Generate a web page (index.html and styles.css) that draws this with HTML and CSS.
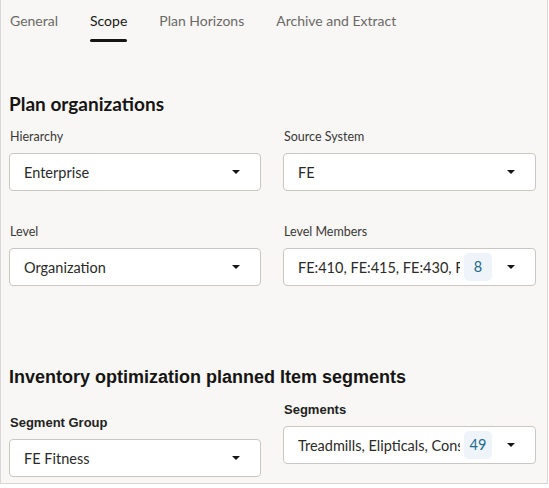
FILE: index.html
```html
<!DOCTYPE html>
<html lang="en">
<head>
    <meta charset="UTF-8">
    <title>Scope</title>
    <link rel="stylesheet" href="styles.css">
</head>
<body>

<div class="panel">
    <nav class="tabs">
        <a class="tab">General</a>
        <a class="tab active">Scope</a>
        <a class="tab">Plan Horizons</a>
        <a class="tab">Archive and Extract</a>
    </nav>

    <section class="orgs">
        <h2>Plan organizations</h2>
        <div class="grid">
            <div class="field">
                <label>Hierarchy</label>
                <div class="select"><span class="value">Enterprise</span><span class="caret"></span></div>
            </div>
            <div class="field">
                <label>Source System</label>
                <div class="select"><span class="value">FE</span><span class="caret"></span></div>
            </div>
            <div class="field">
                <label>Level</label>
                <div class="select"><span class="value">Organization</span><span class="caret"></span></div>
            </div>
            <div class="field">
                <label>Level Members</label>
                <div class="select"><span class="value">FE:410, FE:415, FE:430, FE</span><span class="badge">8</span><span class="caret"></span></div>
            </div>
        </div>
    </section>

    <section class="segments">
        <h2>Inventory optimization planned Item segments</h2>
        <div class="grid">
            <div class="field low">
                <label>Segment Group</label>
                <div class="select"><span class="value">FE Fitness</span><span class="caret"></span></div>
            </div>
            <div class="field">
                <label>Segments</label>
                <div class="select"><span class="value">Treadmills, Elipticals, Cons</span><span class="badge">49</span><span class="caret"></span></div>
            </div>
        </div>
    </section>
</div>

</body>
</html>
```

FILE: styles.css
```css
body {
    margin: 0;
    background-color: #fff;
    font-family: Lato, "Noto Sans", sans-serif;
    color: #161513;
}
.panel {
    width: 546px;
    height: 483px;
    background-color: #f8f7f5;
    border: 1px solid #d9d7d3;
    border-top: none;
}
.tabs {
    display: flex;
    gap: 32px;
    padding-left: 9px;
}
.tab {
    display: flex;
    flex-direction: column;
    padding-top: 11px;
    font-size: 14px;
    line-height: 20px;
    color: #6b6966;
}
.tab::after {
    content: "";
    height: 3px;
    margin-top: 8px;
    border-radius: 2px;
}
.tab.active {
    color: #161513;
}
.tab.active::after {
    background-color: #161513;
}
h2 {
    margin: 0;
    font-size: 18px;
    line-height: 24px;
}
.orgs {
    padding: 50px 0 0 8px;
}
.orgs h2 {
    font-size: 19px;
    margin-bottom: 13px;
}
.grid {
    display: grid;
    grid-template-columns: 252px 253px;
    column-gap: 22px;
    row-gap: 33px;
    align-items: start;
}
label {
    display: block;
    margin: 0 0 8px 1px;
    font-size: 12.5px;
    line-height: 16px;
    color: #3a3836;
}
.select {
    display: flex;
    align-items: center;
    height: 36px;
    padding: 0 20px 0 14px;
    background-color: #fff;
    border: 1px solid #c9c7c3;
    border-radius: 4px;
    font-size: 14.5px;
    color: #2b2a28;
}
.value {
    flex: 1;
    overflow: hidden;
    white-space: nowrap;
}
.badge {
    width: 28px;
    height: 28px;
    margin: 0 15px 0 4px;
    border-radius: 5px;
    background-color: #eef4fa;
    color: #1f6b8e;
    line-height: 28px;
    text-align: center;
}
.caret {
    width: 0;
    height: 0;
    border-left: 4px solid transparent;
    border-right: 4px solid transparent;
    border-top: 4px solid #161513;
}
.segments {
    padding: 79px 0 0 8px;
}
.segments h2 {
    font-family: "Liberation Sans", Arial, sans-serif;
    margin-bottom: 13px;
}
.segments label {
    font-family: "Liberation Sans", Arial, sans-serif;
    font-weight: bold;
    font-size: 13px;
    color: #222;
}
.field.low {
    margin-top: 13px;
}
```
